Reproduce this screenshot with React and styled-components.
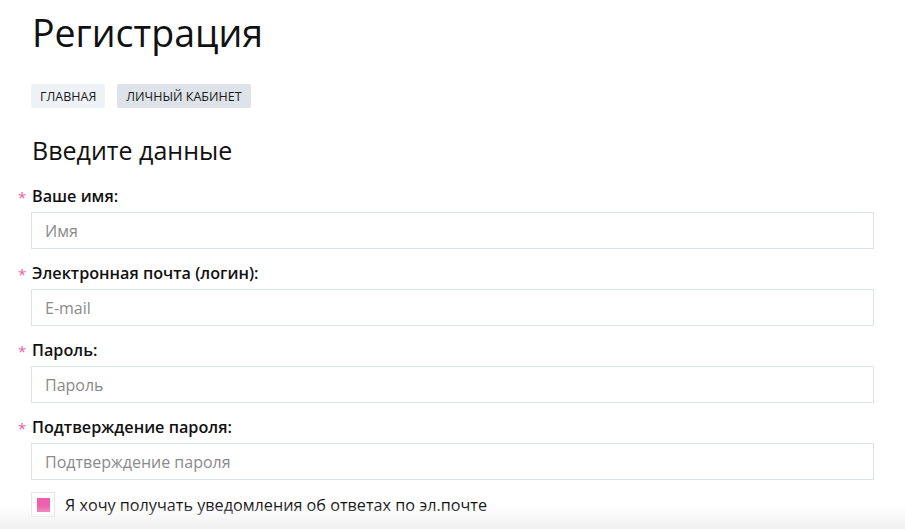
import React, { useState } from 'react';
import styled, { createGlobalStyle } from 'styled-components';

const GlobalStyle = createGlobalStyle`
  body {
    margin: 0;
    background: #fff;
    font-family: "Open Sans", "Noto Sans", sans-serif;
    color: #111;
  }
`;

const fields = [
  { label: 'Ваше имя:', placeholder: 'Имя', type: 'text' },
  { label: 'Электронная почта (логин):', placeholder: 'E-mail', type: 'email' },
  { label: 'Пароль:', placeholder: 'Пароль', type: 'password' },
  { label: 'Подтверждение пароля:', placeholder: 'Подтверждение пароля', type: 'password' }
];

function App() {
  const [notify, setNotify] = useState(true);

  return (
    <>
      <GlobalStyle />
      <Page>
        <Title>Регистрация</Title>
        <Crumbs>
          <Crumb>Главная</Crumb>
          <Crumb active>Личный кабинет</Crumb>
        </Crumbs>
        <Subtitle>Введите данные</Subtitle>
        <Form onSubmit={e => e.preventDefault()}>
          {fields.map(f => (
            <Field key={f.label}>
              <Label>
                <Star>*</Star>
                {f.label}
              </Label>
              <Input type={f.type} placeholder={f.placeholder} />
            </Field>
          ))}
          <CheckRow onClick={() => setNotify(!notify)}>
            <CheckBox>{notify && <CheckMark />}</CheckBox>
            <CheckText>Я хочу получать уведомления об ответах по эл.почте</CheckText>
          </CheckRow>
        </Form>
      </Page>
      <BottomFade />
    </>
  );
}

const Page = styled.div`
  padding: 8px 31px 40px 31px;
`;

const Title = styled.h1`
  margin: 0 0 0 1px;
  font-size: 37.5px;
  font-weight: 400;
  line-height: 50px;
  color: #111;
`;

const Crumbs = styled.div`
  display: flex;
  gap: 12px;
  margin-top: 26px;
`;

const Crumb = styled.span`
  display: flex;
  align-items: center;
  height: 24px;
  padding: 0 9px;
  border-radius: 2px;
  font-size: 12.5px;
  text-transform: uppercase;
  color: #1a1a1a;
  background: ${p => (p.active ? '#dde3e8' : '#eef2f6')};
`;

const Subtitle = styled.h2`
  margin: 26px 0 0 1px;
  font-size: 25px;
  font-weight: 400;
  line-height: 32px;
  color: #111;
`;

const Form = styled.form`
  display: flex;
  flex-direction: column;
  margin-top: 20px;
  width: 843px;
`;

const Field = styled.div`
  display: flex;
  flex-direction: column;
  margin-bottom: 14px;
`;

const Label = styled.label`
  position: relative;
  margin-left: 1px;
  font-size: 16.2px;
  font-weight: 600;
  line-height: 20px;
  color: #111;
`;

const Star = styled.span`
  position: absolute;
  left: -14px;
  top: 1px;
  font-size: 15px;
  font-weight: 400;
  color: #e8629f;
`;

const Input = styled.input`
  box-sizing: border-box;
  margin-top: 6px;
  height: 37px;
  width: 100%;
  padding: 0 13px;
  border: 1px solid #dde3e8;
  border-radius: 0;
  font-family: "Open Sans", sans-serif;
  font-size: 16px;
  color: #111;
  outline: none;

  &::placeholder {
    color: #8a8a8a;
  }
`;

const CheckRow = styled.div`
  display: flex;
  align-items: center;
  gap: 10px;
  margin-top: -2px;
  cursor: pointer;
`;

const CheckBox = styled.span`
  box-sizing: border-box;
  display: flex;
  align-items: center;
  justify-content: center;
  width: 24px;
  height: 25px;
  border: 1px solid #e3e7ea;
  background: #fff;
`;

const CheckMark = styled.span`
  width: 13px;
  height: 14px;
  background: #ee5fac;
`;

const CheckText = styled.span`
  font-size: 16.2px;
  line-height: 24px;
  color: #111;
`;

const BottomFade = styled.div`
  position: fixed;
  left: 0;
  right: 0;
  bottom: 0;
  height: 24px;
  pointer-events: none;
  background: linear-gradient(to bottom, rgba(240, 240, 240, 0), rgba(240, 240, 240, 1));
`;

export default App;
